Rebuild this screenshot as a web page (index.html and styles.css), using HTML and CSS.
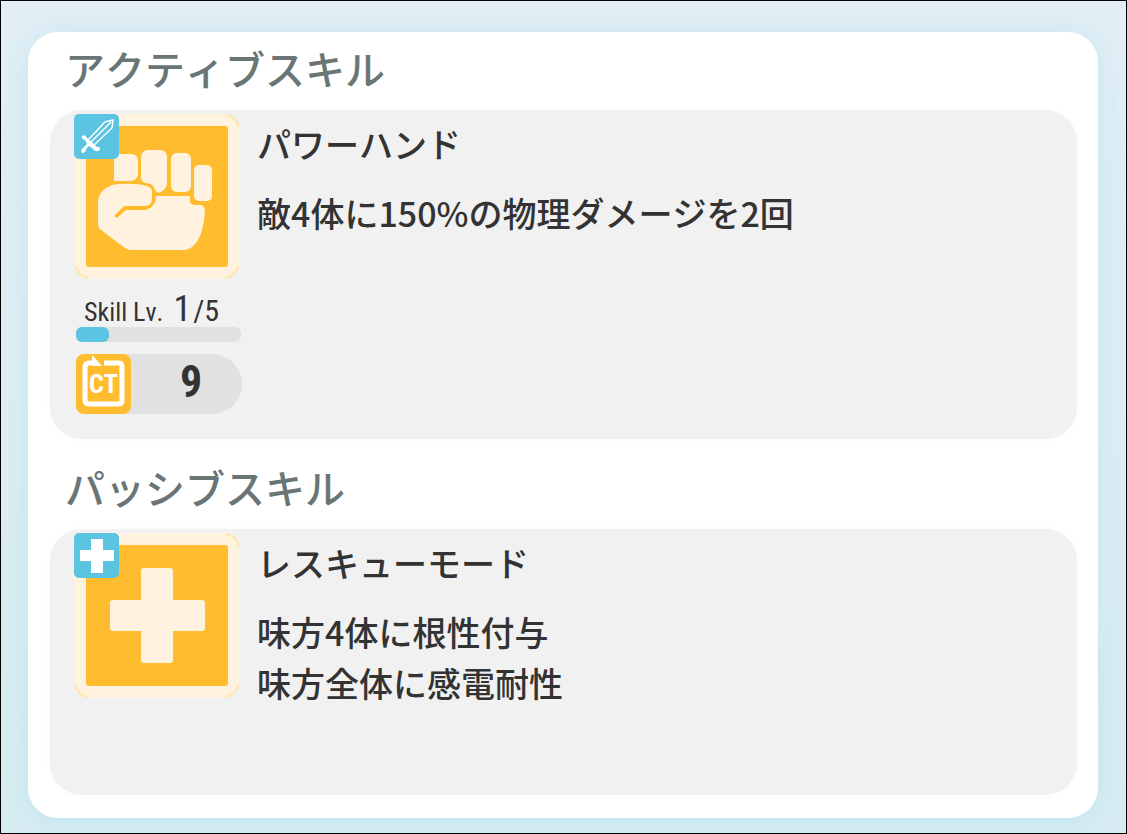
FILE: index.html
```html
<!DOCTYPE html>
<html lang="ja">
<head>
  <meta charset="UTF-8" />
  <meta name="viewport" content="width=device-width, initial-scale=1.0"/>
  <title>スキル</title>
  <link rel="stylesheet" href="styles.css">
</head>
<body>
  <main class="card">
    <!-- アクティブスキル -->
    <section class="skill-section">
      <h2>アクティブスキル</h2>
      <div class="panel">
        <div class="side">
          <div class="skill-icon">
            <svg class="picture" viewBox="0 0 165 165" aria-hidden="true">
              <path class="ring" d="M152 1Q164 4 164 13M1 152Q4 162 14 164M151 164Q162 162 164 152"/>
              <rect class="tile" x="12" y="12" width="142" height="141" rx="3"/>
              <g class="shape">
                <path d="M40 45Q40 40 46 40H58Q64 41 64 47V61Q63 66 57 67H40Z"/>
                <path d="M67 43Q68 36 74 36H87Q93 37 93 43V70Q92 76 85 79Q81 78 80 73Q77 69 71 69Q67 67 67 63Z"/>
                <rect x="97" y="39" width="20" height="39" rx="6"/>
                <rect x="120" y="51" width="18" height="36" rx="5"/>
                <path d="M38 71Q46 69 60 70Q78 71 78 77V86Q77 92 70 92H50L40 102L43 104L52 96H72Q82 93 82 82H116V88Q117 91 121 91H127Q131 92 131 97Q129 124 119 132Q115 136 109 136H57Q53 136 47 131L27 116Q24 114 24 109V87Q25 76 38 71Z"/>
              </g>
            </svg>
            <svg class="badge" viewBox="0 0 45 45" aria-hidden="true">
              <rect class="badge-tile" width="45" height="45" rx="5"/>
              <g class="sword">
                <path d="M14 26L31 8L39 6L38 14L20 31Z"/>
                <path d="M16 29L37 8"/>
                <path class="hilt" d="M8 22Q11 20 13 24L23 33Q26 32 26 36Q21 39 18 34L15 32L12 35Q12 39 8 39Q6 36 9 34L13 30L11 26Q7 25 8 22Z"/>
              </g>
            </svg>
          </div>
          <div class="level">
            <span>Skill Lv.</span>
            <span class="level-now">1</span>
            <span class="level-max">/5</span>
          </div>
          <div class="bar"><div class="bar-fill" style="width: 20%"></div></div>
          <div class="ct">
            <div class="ct-icon">
              <svg viewBox="0 0 55 60" aria-hidden="true">
                <path class="ct-frame" d="M28 9H43Q46 9 46 13V46Q46 50 43 50H13Q9 50 9 46V13Q9 9 13 9H20"/>
                <path class="ct-arrow" d="M16 1L26 12H16Z"/>
              </svg>
              <span class="ct-label">CT</span>
            </div>
            <span class="ct-value">9</span>
          </div>
        </div>
        <div class="info">
          <h3>パワーハンド</h3>
          <p>敵4体に150%の物理ダメージを2回</p>
        </div>
      </div>
    </section>

    <!-- パッシブスキル -->
    <section class="skill-section">
      <h2>パッシブスキル</h2>
      <div class="panel panel-passive">
        <div class="side">
          <div class="skill-icon">
            <svg class="picture" viewBox="0 0 165 165" aria-hidden="true">
              <path class="ring" d="M152 1Q164 4 164 13M1 152Q4 162 14 164M151 164Q162 162 164 152"/>
              <rect class="tile" x="12" y="12" width="142" height="141" rx="3"/>
              <g class="shape">
                <rect x="67" y="35" width="32" height="95" rx="3"/>
                <rect x="36" y="67" width="95" height="31" rx="3"/>
              </g>
            </svg>
            <svg class="badge" viewBox="0 0 45 45" aria-hidden="true">
              <rect class="badge-tile" width="45" height="45" rx="5"/>
              <path class="cross" d="M17 6H29V17H40V28H29V40H17V28H6V17H17Z"/>
            </svg>
          </div>
        </div>
        <div class="info">
          <h3>レスキューモード</h3>
          <p>味方4体に根性付与<br>味方全体に感電耐性</p>
        </div>
      </div>
    </section>
  </main>
</body>
</html>
```
FILE: styles.css
```css
* {
  box-sizing: border-box;
}

body {
  margin: 0;
  min-height: 100vh;
  padding: 31px 28px 15px 27px;
  border: 1px solid #000;
  background: linear-gradient(#e2eef5, #d7ecf2);
  font-family: "Noto Sans CJK JP", sans-serif;
  font-weight: 500;
  font-kerning: none;
  color: #333;
}

h2,
h3,
p {
  margin: 0;
  font-weight: 500;
}

.card {
  padding: 6px 21px 23px 22px;
  border-radius: 30px;
  background: #fff;
  box-shadow: 0 2px 24px rgba(160, 222, 234, 0.45);
}

.skill-section + .skill-section {
  margin-top: 18px;
}

h2 {
  padding: 0 15px 12px;
  font-size: 40px;
  line-height: 60px;
  color: #6a7675;
}

.panel {
  display: flex;
  gap: 15px;
  padding: 4px 24px 25px;
  border-radius: 32px;
  background: #f1f1f1;
  box-shadow: 0 0 10px rgba(0, 0, 0, 0.02);
}

.panel-passive {
  min-height: 266px;
}

.side {
  flex: 0 0 168px;
}

/* スキルアイコン */
.skill-icon {
  position: relative;
  width: 165px;
  height: 165px;
  border-radius: 14px;
  background: #fff3df;
}

.picture {
  display: block;
  width: 100%;
}

.ring {
  fill: none;
  stroke: #ffe5b0;
  stroke-width: 2;
}

.tile {
  fill: #ffbc2f;
}

.shape {
  fill: #fff3df;
}

.badge {
  position: absolute;
  top: 0;
  left: 0;
  width: 45px;
  height: 45px;
}

.badge-tile {
  fill: #5bc5e1;
}

.sword {
  fill: none;
  stroke: #fff;
  stroke-width: 1.4;
}

.hilt,
.cross,
.ct-arrow {
  fill: #fff;
}

.hilt {
  stroke: none;
}

/* レベル */
.level,
.ct {
  font-family: "Roboto Condensed", Roboto, "Liberation Sans", sans-serif;
}

.level {
  display: flex;
  align-items: baseline;
  gap: 10px;
  height: 48px;
  padding: 12px 0 0 10px;
  font-size: 26px;
  font-weight: 400;
  line-height: 36px;
}

.level-now {
  font-size: 36px;
}

.level-max {
  margin-left: -8px;
  font-size: 30px;
}

.bar {
  height: 15px;
  margin: 0 1px 12px 2px;
  border-radius: 6px;
  background: #e1e1e1;
}

.bar-fill {
  height: 100%;
  border-radius: 6px;
  background: #5bc5e1;
}

/* CT */
.ct {
  display: flex;
  height: 60px;
  margin-left: 2px;
  border-radius: 8px 30px 30px 8px;
  background: #e1e1e1;
  font-weight: bold;
}

.ct-icon {
  display: grid;
  width: 55px;
  border-radius: 8px;
  background: #ffbc2f;
}

.ct-icon svg,
.ct-label {
  grid-area: 1 / 1;
}

.ct-frame {
  fill: none;
  stroke: #fff;
  stroke-width: 5;
}

.ct-label {
  place-self: center;
  font-size: 26px;
  line-height: 60px;
  color: #fff;
}

.ct-value {
  flex: 1;
  padding-left: 9px;
  font-size: 44px;
  line-height: 56px;
  text-align: center;
}

/* スキル説明 */
.info {
  flex: 1;
  padding-top: 4px;
  font-size: 34px;
  line-height: 51px;
}

.info h3 {
  margin-bottom: 18px;
  font-size: 34px;
}
```
